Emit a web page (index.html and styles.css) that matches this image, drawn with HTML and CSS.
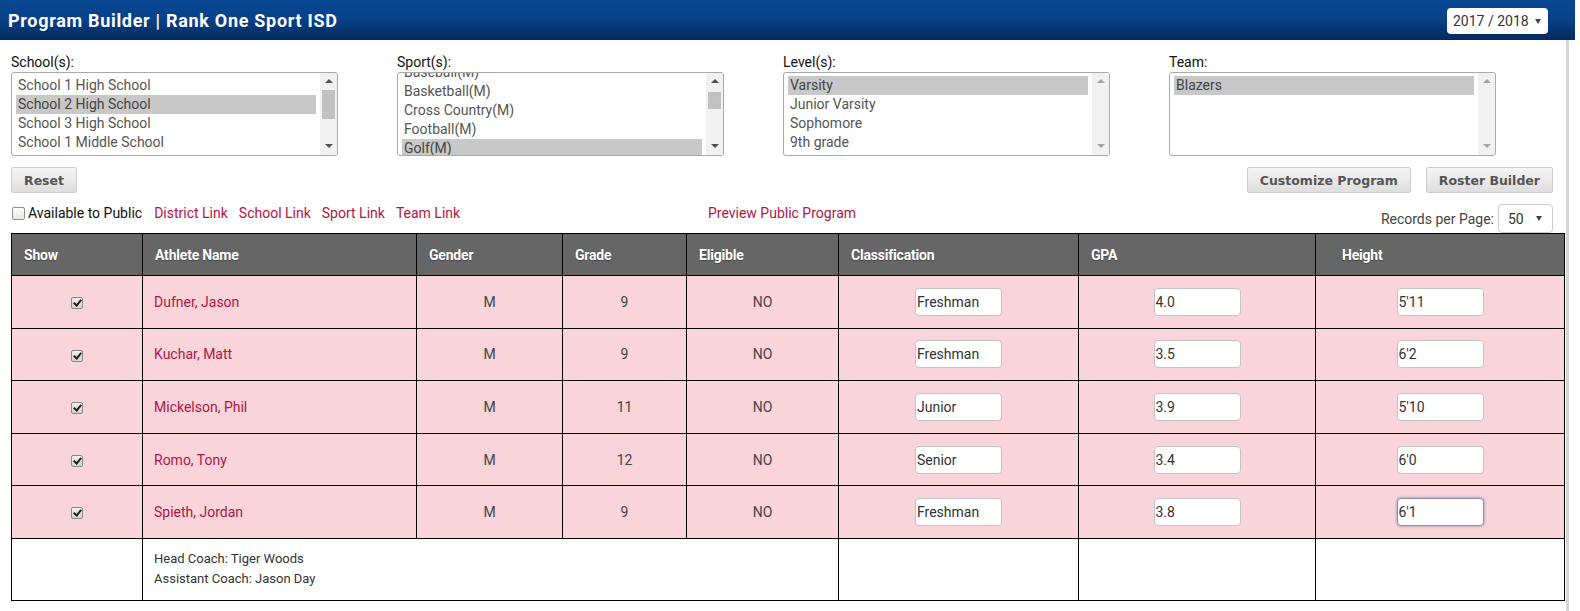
FILE: index.html
```html
<!DOCTYPE html>
<html lang="en">
    <head>
        <meta charset="UTF-8" />
        <link rel="stylesheet" href="styles.css">
        <title>Program Builder | Rank One Sport ISD</title>
    </head>

    <body>
        <header class="topbar">
            <h1>Program Builder | Rank One Sport ISD</h1>
            <div class="year-select">2017 / 2018 <span class="caret"></span></div>
        </header>

        <main class="content">
            <div class="filters">
                <div class="filter">
                    <label>School(s):</label>
                    <div class="listbox">
                        <ul class="options">
                            <li>School 1 High School</li>
                            <li class="selected">School 2 High School</li>
                            <li>School 3 High School</li>
                            <li>School 1 Middle School</li>
                        </ul>
                        <div class="scrollbar">
                            <span class="arrow up"></span>
                            <span class="thumb thumb-school"></span>
                            <span class="arrow down"></span>
                        </div>
                    </div>
                </div>
                <div class="filter">
                    <label>Sport(s):</label>
                    <div class="listbox">
                        <ul class="options scrolled">
                            <li>Baseball(M)</li>
                            <li>Basketball(M)</li>
                            <li>Cross Country(M)</li>
                            <li>Football(M)</li>
                            <li class="selected">Golf(M)</li>
                        </ul>
                        <div class="scrollbar">
                            <span class="arrow up"></span>
                            <span class="thumb thumb-sport"></span>
                            <span class="arrow down"></span>
                        </div>
                    </div>
                </div>
                <div class="filter">
                    <label>Level(s):</label>
                    <div class="listbox">
                        <ul class="options">
                            <li class="selected">Varsity</li>
                            <li>Junior Varsity</li>
                            <li>Sophomore</li>
                            <li>9th grade</li>
                        </ul>
                        <div class="scrollbar disabled">
                            <span class="arrow up"></span>
                            <span class="arrow down"></span>
                        </div>
                    </div>
                </div>
                <div class="filter">
                    <label>Team:</label>
                    <div class="listbox">
                        <ul class="options">
                            <li class="selected">Blazers</li>
                        </ul>
                        <div class="scrollbar disabled">
                            <span class="arrow up"></span>
                            <span class="arrow down"></span>
                        </div>
                    </div>
                </div>
            </div>

            <div class="actions">
                <button class="btn">Reset</button>
                <div class="actions-right">
                    <button class="btn">Customize Program</button>
                    <button class="btn">Roster Builder</button>
                </div>
            </div>

            <div class="links">
                <div class="links-left">
                    <span class="box"></span>
                    <span class="public">Available to Public</span>
                    <a href="#">District Link</a>
                    <a href="#">School Link</a>
                    <a href="#">Sport Link</a>
                    <a href="#">Team Link</a>
                </div>
                <a href="#" class="preview">Preview Public Program</a>
                <div class="records">
                    Records per Page:
                    <div class="records-select">50 <span class="caret"></span></div>
                </div>
            </div>

            <table class="roster">
                <colgroup>
                    <col style="width: 131px">
                    <col style="width: 274px">
                    <col style="width: 146px">
                    <col style="width: 124px">
                    <col style="width: 152px">
                    <col style="width: 240px">
                    <col style="width: 237px">
                    <col style="width: 249px">
                </colgroup>
                <thead>
                    <tr>
                        <th>Show</th>
                        <th>Athlete Name</th>
                        <th>Gender</th>
                        <th>Grade</th>
                        <th>Eligible</th>
                        <th>Classification</th>
                        <th>GPA</th>
                        <th class="th-height">Height</th>
                    </tr>
                </thead>
                <tbody>
                    <tr class="athlete">
                        <td class="center"><span class="chk"></span></td>
                        <td><a href="#">Dufner, Jason</a></td>
                        <td class="center">M</td>
                        <td class="center">9</td>
                        <td class="center">NO</td>
                        <td class="center"><input type="text" value="Freshman"></td>
                        <td class="center"><input type="text" value="4.0"></td>
                        <td class="center"><input type="text" value="5'11"></td>
                    </tr>
                    <tr class="athlete">
                        <td class="center"><span class="chk"></span></td>
                        <td><a href="#">Kuchar, Matt</a></td>
                        <td class="center">M</td>
                        <td class="center">9</td>
                        <td class="center">NO</td>
                        <td class="center"><input type="text" value="Freshman"></td>
                        <td class="center"><input type="text" value="3.5"></td>
                        <td class="center"><input type="text" value="6'2"></td>
                    </tr>
                    <tr class="athlete">
                        <td class="center"><span class="chk"></span></td>
                        <td><a href="#">Mickelson, Phil</a></td>
                        <td class="center">M</td>
                        <td class="center">11</td>
                        <td class="center">NO</td>
                        <td class="center"><input type="text" value="Junior"></td>
                        <td class="center"><input type="text" value="3.9"></td>
                        <td class="center"><input type="text" value="5'10"></td>
                    </tr>
                    <tr class="athlete">
                        <td class="center"><span class="chk"></span></td>
                        <td><a href="#">Romo, Tony</a></td>
                        <td class="center">M</td>
                        <td class="center">12</td>
                        <td class="center">NO</td>
                        <td class="center"><input type="text" value="Senior"></td>
                        <td class="center"><input type="text" value="3.4"></td>
                        <td class="center"><input type="text" value="6'0"></td>
                    </tr>
                    <tr class="athlete">
                        <td class="center"><span class="chk"></span></td>
                        <td><a href="#">Spieth, Jordan</a></td>
                        <td class="center">M</td>
                        <td class="center">9</td>
                        <td class="center">NO</td>
                        <td class="center"><input type="text" value="Freshman"></td>
                        <td class="center"><input type="text" value="3.8"></td>
                        <td class="center"><input type="text" class="focused" value="6'1"></td>
                    </tr>
                    <tr class="coaches">
                        <td></td>
                        <td colspan="4">Head Coach: Tiger Woods<br>Assistant Coach: Jason Day</td>
                        <td></td>
                        <td></td>
                        <td></td>
                    </tr>
                </tbody>
            </table>
        </main>
    </body>
</html>
```

FILE: styles.css
```css
@charset "utf-8";

* {
    margin: 0;
    padding: 0;
    box-sizing: border-box;
}

body {
    font-family: Roboto, "Liberation Sans", sans-serif;
    font-size: 14px;
    color: #333;
    background: #fff;
    overflow: hidden;
}

a {
    color: #b01646;
    text-decoration: none;
}

/* top bar */
.topbar {
    width: 1575px;
    height: 40px;
    display: flex;
    align-items: center;
    justify-content: space-between;
    padding: 0 27px 0 8px;
    background: linear-gradient(to bottom, #084792 0%, #07428a 45%, #032a5c 100%);
}

.topbar h1 {
    color: #fff;
    font-size: 18px;
    font-weight: 700;
    letter-spacing: 0.7px;
    margin-top: 1px;
}

.year-select {
    width: 101px;
    height: 26px;
    background: #fff;
    border-radius: 4px;
    padding-left: 6px;
    display: flex;
    align-items: center;
    gap: 6px;
    color: #333;
    font-size: 14px;
    margin-top: 2px;
}

.caret {
    width: 0;
    height: 0;
    border-left: 3px solid transparent;
    border-right: 3px solid transparent;
    border-top: 5px solid #444;
}

/* page body */
.content {
    width: 1569px;
    height: 571px;
    padding: 13px 0 0 11px;
    border-right: 3px solid #d6d6d6;
}

.filters {
    display: grid;
    grid-template-columns: repeat(4, 327px);
    column-gap: 59px;
}

.filter label {
    display: block;
    color: #111;
    font-size: 14px;
    line-height: 19px;
}

.listbox {
    position: relative;
    height: 84px;
    border: 1px solid #a9a9a9;
    border-radius: 3px;
    overflow: hidden;
    display: flex;
}

.options {
    list-style: none;
    flex: 1;
    padding: 3px 4px 0 4px;
    color: #555;
}

.options.scrolled {
    margin-top: -13px;
}

.options li {
    height: 19px;
    line-height: 19px;
    padding-left: 2px;
}

.options li.selected {
    background: #c8c8c8;
    color: #444;
}

.scrollbar {
    position: relative;
    width: 17px;
    background: #f1f1f1;
}

.arrow {
    position: absolute;
    left: 5px;
    width: 0;
    height: 0;
    border-left: 4px solid transparent;
    border-right: 4px solid transparent;
}

.arrow.up {
    top: 6px;
    border-bottom: 4px solid #505050;
}

.arrow.down {
    bottom: 7px;
    border-top: 4px solid #505050;
}

.scrollbar.disabled .arrow.up {
    border-bottom-color: #a3a3a3;
}

.scrollbar.disabled .arrow.down {
    border-top-color: #a3a3a3;
}

.thumb {
    position: absolute;
    left: 2px;
    width: 13px;
    background: #c1c1c1;
}

.thumb-school {
    top: 17px;
    height: 29px;
}

.thumb-sport {
    top: 19px;
    height: 17px;
}

/* buttons */
.actions {
    display: flex;
    justify-content: space-between;
    margin-top: 11px;
    width: 1542px;
}

.actions-right {
    display: flex;
    gap: 15px;
}

.btn {
    height: 26px;
    padding: 0 12px;
    font-family: "DejaVu Sans", Verdana, sans-serif;
    font-size: 12.5px;
    font-weight: 700;
    color: #555;
    background: linear-gradient(to bottom, #f5f5f5, #dedede);
    border: 1px solid #cfcfcf;
    border-radius: 2px;
}

/* link row */
.links {
    display: grid;
    grid-template-columns: 1fr auto 1fr;
    align-items: start;
    margin-top: 10px;
    width: 1542px;
    height: 30px;
}

.links-left {
    display: flex;
    align-items: center;
    height: 20px;
}

.links-left a {
    margin-right: 11px;
}

.box {
    width: 13px;
    height: 13px;
    border: 1px solid #8f8f8f;
    border-radius: 2px;
    background: linear-gradient(to bottom, #fff, #e6e6e6);
    margin: 0 3px 0 1px;
}

.public {
    color: #111;
    margin-right: 12px;
}

.preview {
    line-height: 20px;
}

.records {
    justify-self: end;
    display: flex;
    align-items: center;
    gap: 4px;
    color: #444;
    margin-top: 1px;
}

.records-select {
    width: 55px;
    height: 29px;
    border: 1px solid #ccc;
    border-radius: 4px;
    display: flex;
    align-items: center;
    justify-content: space-between;
    padding: 0 10px 0 9px;
    color: #333;
}

/* roster table */
.roster {
    width: 1553px;
    border-collapse: collapse;
    table-layout: fixed;
}

.roster th,
.roster td {
    border: 1px solid #000;
}

.roster th {
    height: 42px;
    background: #666;
    color: #fff;
    font-weight: 700;
    text-align: left;
    padding: 0 12px;
    letter-spacing: -0.2px;
    text-shadow: 0 1px 1px rgba(0, 0, 0, 0.35);
}

.roster th.th-height {
    padding-left: 26px;
}

.athlete td {
    height: 52.6px;
    background: #f9d4da;
    padding: 0 11px;
    color: #444;
}

.roster td.center {
    text-align: center;
}

.chk {
    display: inline-block;
    width: 12px;
    height: 12px;
    border: 1px solid #8a8a8a;
    border-radius: 2px;
    background: linear-gradient(to bottom, #f2f2f2, #d2d2d2);
    position: relative;
    vertical-align: middle;
}

.chk::after {
    content: "";
    position: absolute;
    left: 3px;
    top: 0px;
    width: 3px;
    height: 6px;
    border-right: 2px solid #222;
    border-bottom: 2px solid #222;
    transform: rotate(40deg);
}

.roster input {
    width: 87px;
    height: 28px;
    border: 1px solid #c4c4c4;
    border-radius: 4px;
    padding: 0 1px;
    font-family: Roboto, "Liberation Sans", sans-serif;
    font-size: 14px;
    color: #333;
    background: #fff;
    vertical-align: middle;
}

.roster input.focused {
    border-color: #8b8fb8;
    box-shadow: 0 0 3px #7d80aa;
}

.coaches td {
    height: 62px;
    padding: 9px 11px;
    font-size: 13px;
    line-height: 20px;
    color: #333;
}
```
